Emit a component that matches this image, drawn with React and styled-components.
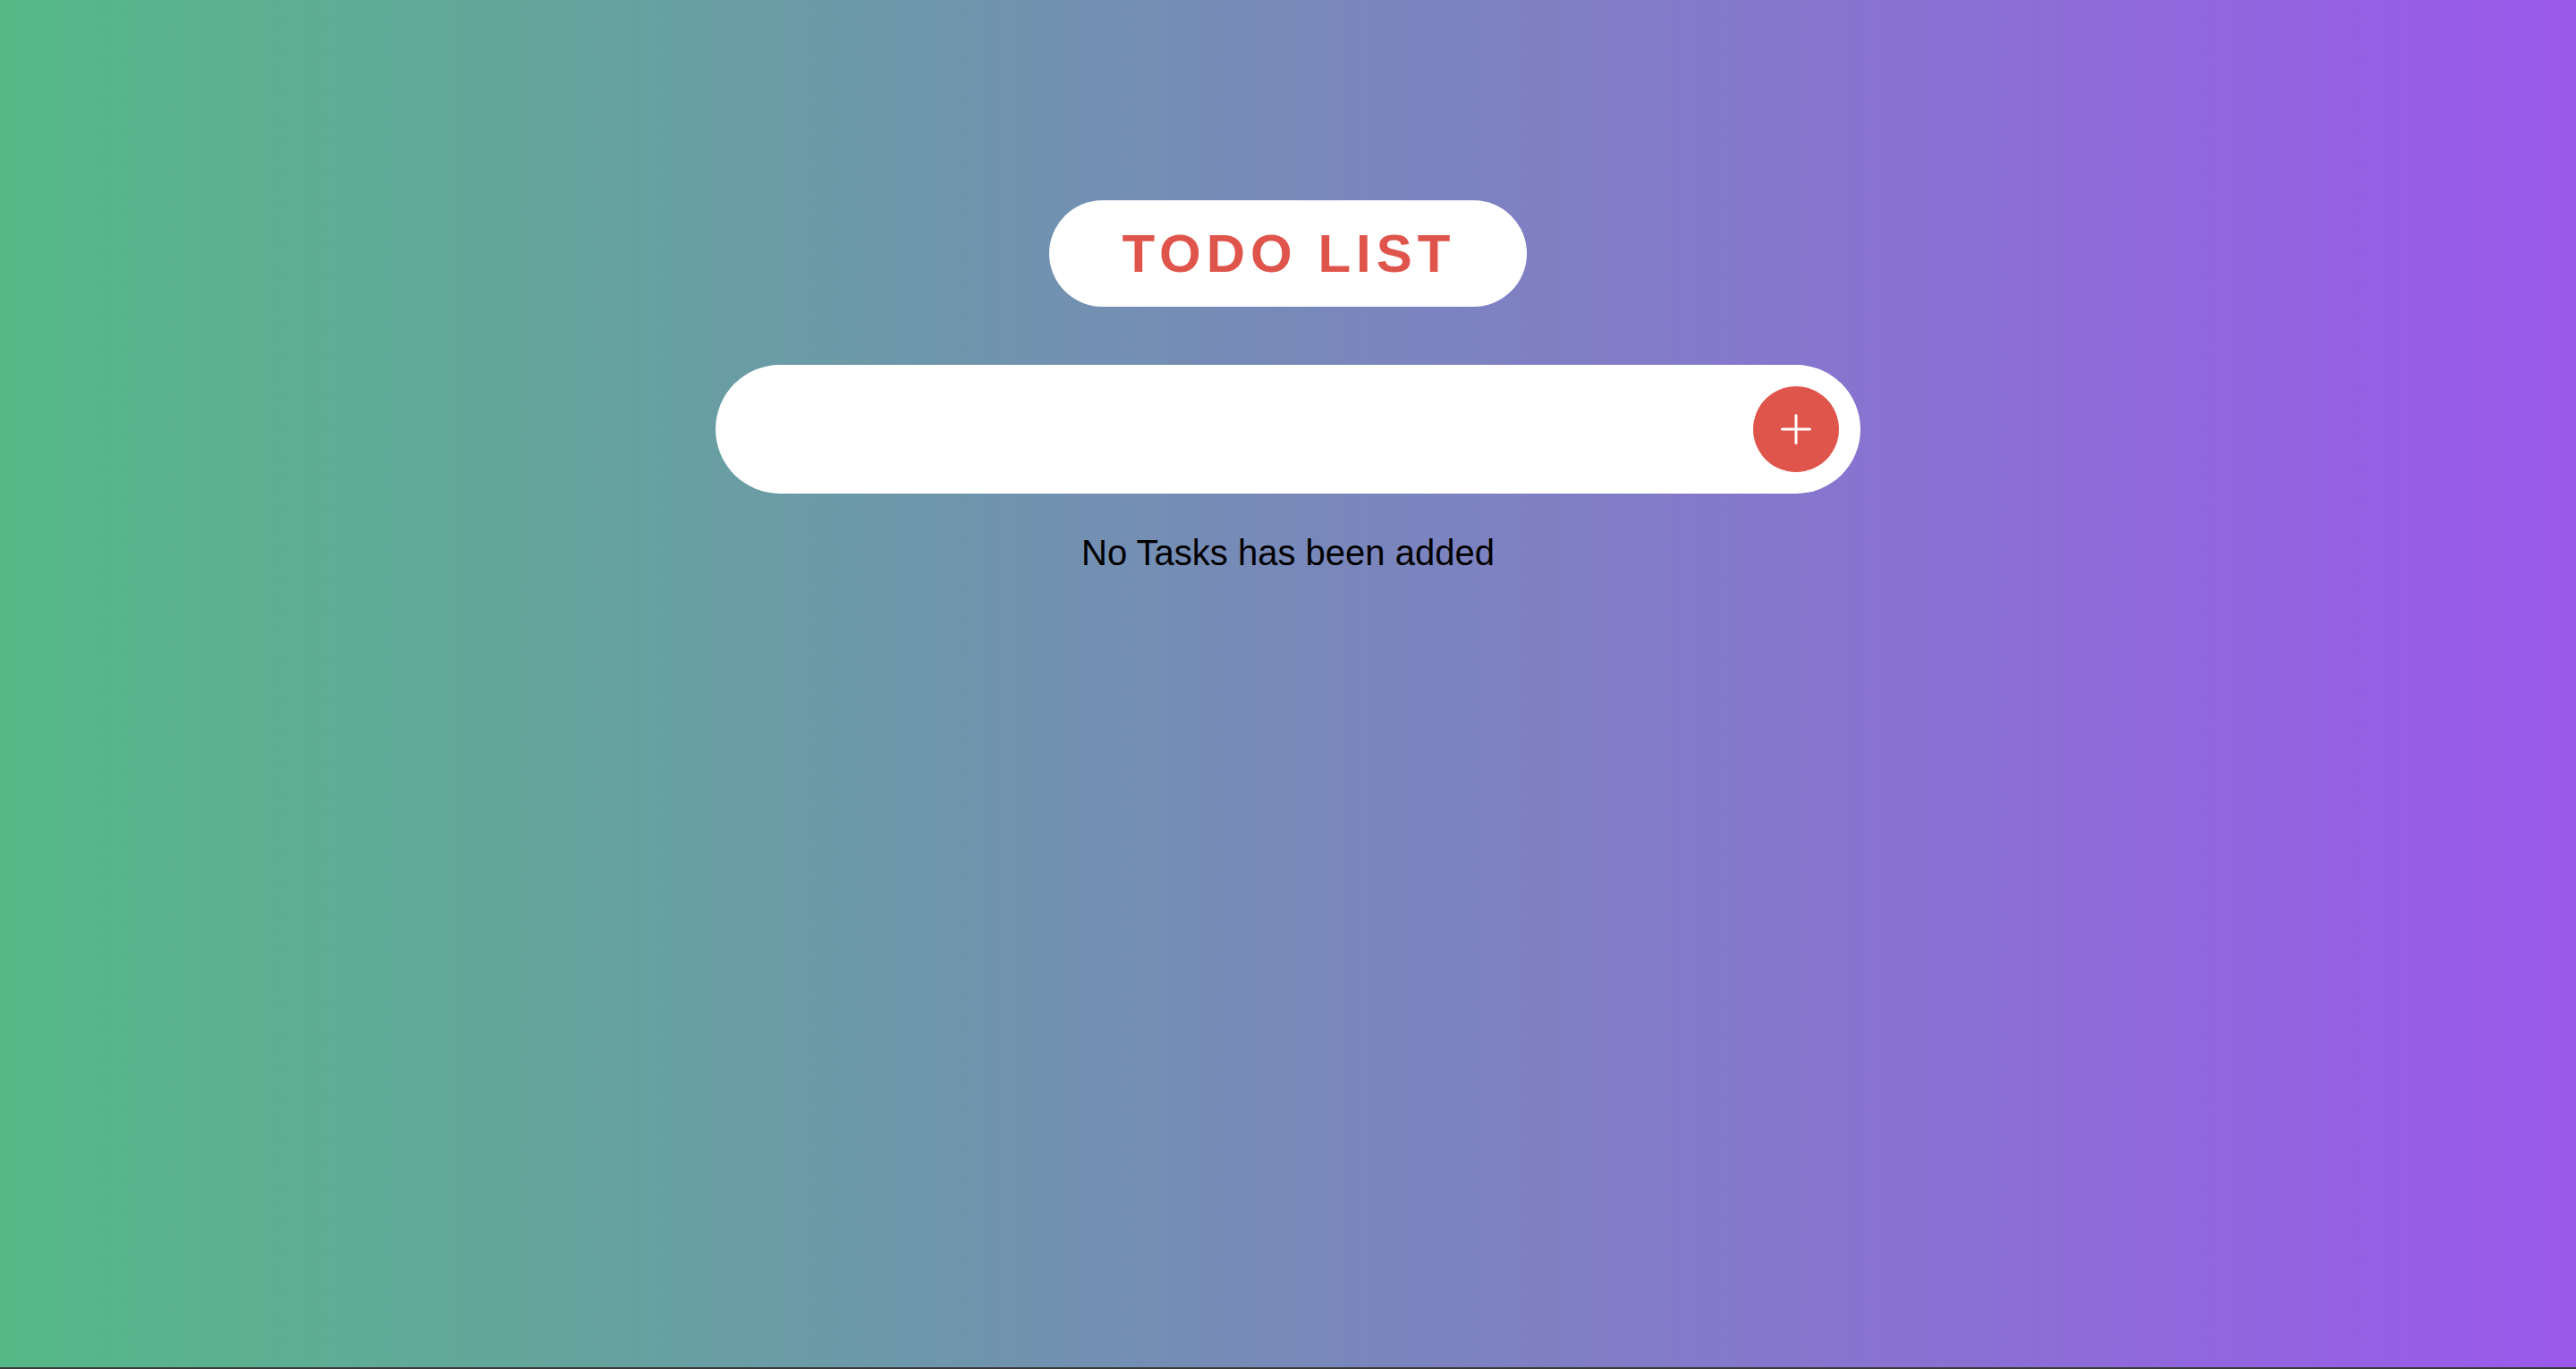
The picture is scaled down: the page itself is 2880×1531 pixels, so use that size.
import React, { useState } from "react";
import styled, { createGlobalStyle } from "styled-components";

const GlobalStyle = createGlobalStyle`
  html, body {
    margin: 0;
    padding: 0;
    background: #3a3a3a;
  }
  * {
    box-sizing: border-box;
  }
`;

const Page = styled.div`
  min-height: calc(100vh - 2px);
  background: linear-gradient(to right, #55b987, #9b59ec);
  font-family: "Liberation Sans", Arial, sans-serif;
  display: flex;
  flex-direction: column;
  align-items: center;
  padding-top: 224px;
`;

const Title = styled.h1`
  margin: 0;
  height: 119px;
  padding: 0 80px 0 82px;
  display: flex;
  align-items: center;
  background: #fff;
  border-radius: 60px;
  color: #df554b;
  font-size: 60px;
  font-weight: 700;
  letter-spacing: 6px;
`;

const Form = styled.form`
  margin-top: 65px;
  width: 1280px;
  height: 144px;
  background: #fff;
  border-radius: 72px;
  display: flex;
  align-items: center;
  padding: 0 24px 0 72px;
`;

const Input = styled.input`
  flex: 1;
  border: none;
  outline: none;
  background: transparent;
  font-family: inherit;
  font-size: 40px;
  height: 100%;
`;

const AddButton = styled.button`
  width: 96px;
  height: 96px;
  border: none;
  border-radius: 50%;
  background: #df554b;
  display: flex;
  align-items: center;
  justify-content: center;
  cursor: pointer;
  padding: 0;
`;

const Empty = styled.p`
  margin: 44px 0 0;
  font-size: 40px;
  color: #000;
`;

const PlusIcon = () => (
  <svg width="34" height="34" viewBox="0 0 34 34">
    <path
      d="M17 1.5v31M1.5 17h31"
      stroke="#fff"
      strokeWidth="3"
      strokeLinecap="round"
      fill="none"
    />
  </svg>
);

export default function App() {
  const [value, setValue] = useState("");
  const [tasks, setTasks] = useState([]);

  const handleSubmit = (e) => {
    e.preventDefault();
    if (!value.trim()) return;
    setTasks([...tasks, value.trim()]);
    setValue("");
  };

  return (
    <>
      <GlobalStyle />
      <Page>
        <Title>TODO LIST</Title>
        <Form onSubmit={handleSubmit}>
          <Input value={value} onChange={(e) => setValue(e.target.value)} />
          <AddButton type="submit" aria-label="Add task">
            <PlusIcon />
          </AddButton>
        </Form>
        {tasks.length === 0 ? (
          <Empty>No Tasks has been added</Empty>
        ) : (
          tasks.map((t, i) => <Empty key={i}>{t}</Empty>)
        )}
      </Page>
    </>
  );
}
